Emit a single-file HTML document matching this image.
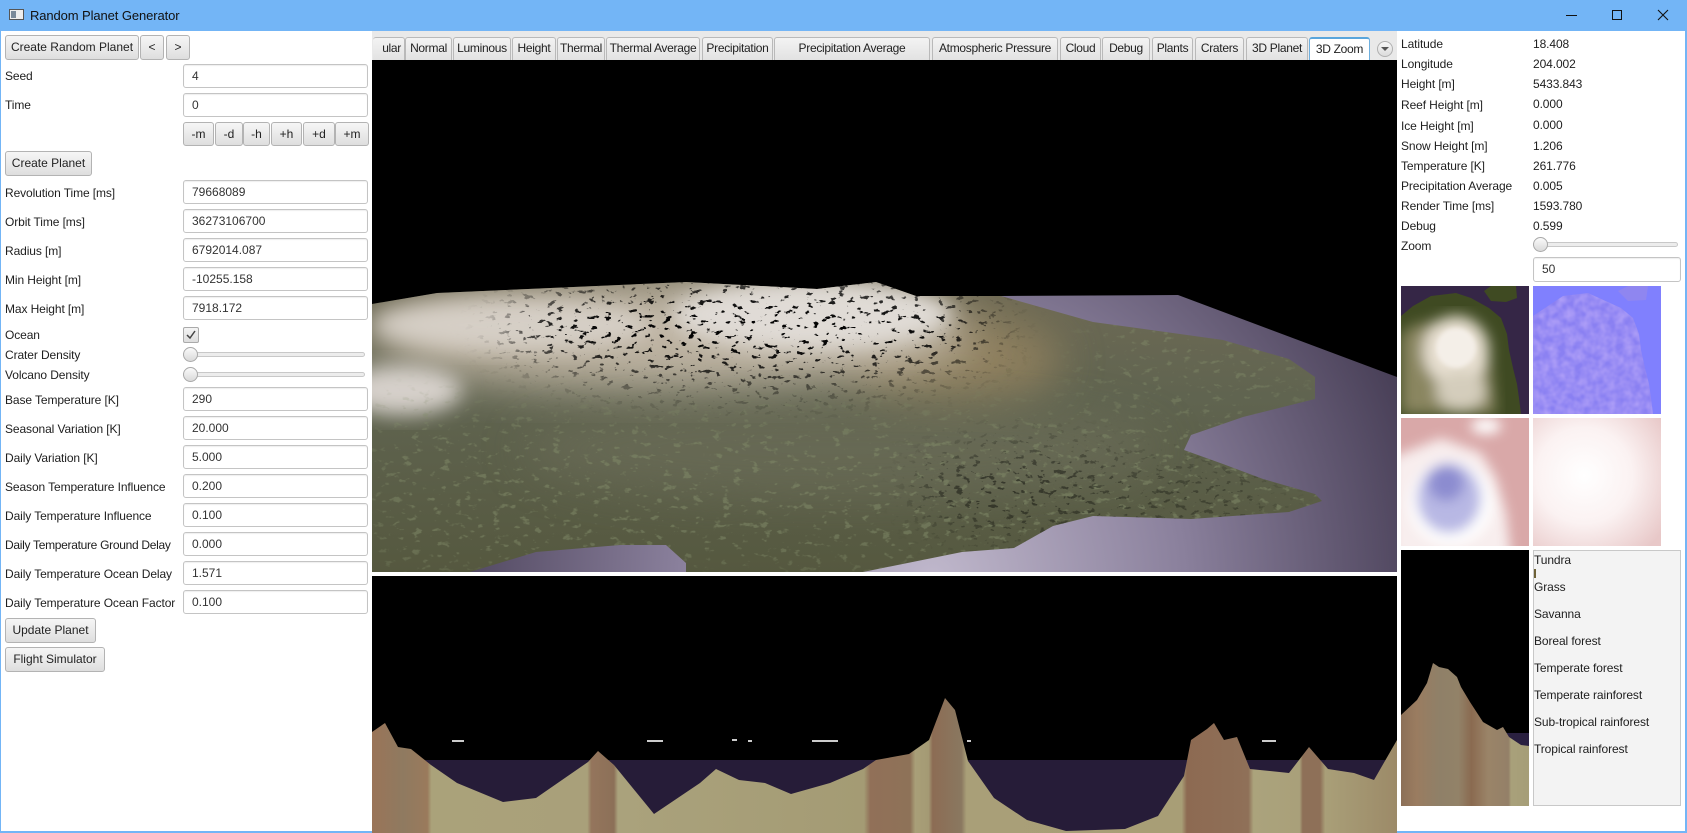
<!DOCTYPE html>
<html><head><meta charset="utf-8">
<style>
*{margin:0;padding:0;box-sizing:border-box}
body{width:1687px;height:833px;overflow:hidden;background:#fff;font-family:"Liberation Sans",sans-serif;font-size:12px;color:#1e1e1e;position:relative}
.a{position:absolute}
.lbl{position:absolute;white-space:nowrap;line-height:16px;letter-spacing:-0.1px}
.fld{position:absolute;height:24px;border:1px solid #c4c4c4;border-radius:3px;background:#fff;padding-left:8px;line-height:22px;color:#333;box-shadow:inset 0 1px 1px #eee}
.btn{position:absolute;height:25px;border:1px solid #b3b3b3;border-radius:3px;background:linear-gradient(#f6f6f6,#dedede);text-align:center;line-height:23px;color:#222;white-space:nowrap}
.tab{position:absolute;top:37px;height:23px;border:1px solid #b9b9b9;border-bottom:none;border-radius:3px 3px 0 0;background:linear-gradient(#f3f3f3,#e2e2e2);text-align:center;line-height:21px;white-space:nowrap;overflow:hidden;color:#222;letter-spacing:-0.3px;font-size:12px}
.trk{position:absolute;height:5px;border:1px solid #c8c8c8;border-radius:3px;background:#ececec}
.thumb{position:absolute;width:15px;height:15px;border-radius:50%;border:1px solid #a9a9a9;background:linear-gradient(#fafafa,#d9d9d9)}
</style></head><body>
<!-- title bar -->
<div class="a" style="left:0;top:0;width:1687px;height:31px;background:#73b5f6"></div>
<div class="a" style="left:9px;top:9px;width:15px;height:11px;border:1px solid #555;background:#eee"></div>
<div class="a" style="left:11px;top:11px;width:5px;height:7px;background:#7a8a9a"></div>
<div class="lbl" style="left:30px;top:8px;color:#111;font-size:13px">Random Planet Generator</div>
<div class="a" style="left:1566px;top:15px;width:11px;height:1px;background:#111"></div>
<div class="a" style="left:1612px;top:10px;width:10px;height:10px;border:1px solid #111"></div>
<svg class="a" style="left:1657px;top:9px" width="12" height="12"><path d="M1 1L11 11M11 1L1 11" stroke="#111" stroke-width="1.1"/></svg>
<div class="a" style="left:0;top:31px;width:1px;height:802px;background:#73b5f6"></div>
<div class="a" style="left:1685px;top:31px;width:2px;height:802px;background:#73b5f6"></div>
<div class="a" style="left:0;top:831px;width:1687px;height:2px;background:#73b5f6"></div>

<!-- left panel -->
<div class="btn" style="left:5px;top:35px;width:134px">Create Random Planet</div>
<div class="btn" style="left:140px;top:35px;width:24px">&lt;</div>
<div class="btn" style="left:166px;top:35px;width:24px">&gt;</div>
<div class="lbl" style="left:5px;top:68px">Seed</div><div class="fld" style="left:183px;top:64px;width:185px">4</div>
<div class="lbl" style="left:5px;top:97px">Time</div><div class="fld" style="left:183px;top:93px;width:185px">0</div>
<div class="btn" style="left:183px;top:122px;width:31px;height:24px">-m</div>
<div class="btn" style="left:215px;top:122px;width:28px;height:24px">-d</div>
<div class="btn" style="left:243px;top:122px;width:27px;height:24px">-h</div>
<div class="btn" style="left:271px;top:122px;width:31px;height:24px">+h</div>
<div class="btn" style="left:303px;top:122px;width:32px;height:24px">+d</div>
<div class="btn" style="left:335px;top:122px;width:34px;height:24px">+m</div>
<div class="btn" style="left:5px;top:151px;width:87px">Create Planet</div>
<div class="lbl" style="left:5px;top:185px">Revolution Time [ms]</div><div class="fld" style="left:183px;top:180px;width:185px">79668089</div>
<div class="lbl" style="left:5px;top:214px">Orbit Time [ms]</div><div class="fld" style="left:183px;top:209px;width:185px">36273106700</div>
<div class="lbl" style="left:5px;top:243px">Radius [m]</div><div class="fld" style="left:183px;top:238px;width:185px">6792014.087</div>
<div class="lbl" style="left:5px;top:272px">Min Height [m]</div><div class="fld" style="left:183px;top:267px;width:185px">-10255.158</div>
<div class="lbl" style="left:5px;top:301px">Max Height [m]</div><div class="fld" style="left:183px;top:296px;width:185px">7918.172</div>
<div class="lbl" style="left:5px;top:327px">Ocean</div>
<div class="a" style="left:183px;top:327px;width:16px;height:16px;border:1px solid #aaa;border-radius:2px;background:linear-gradient(#f4f4f4,#ddd)"></div>
<svg class="a" style="left:185px;top:329px" width="12" height="12"><path d="M2 6L5 9L10 2" fill="none" stroke="#444" stroke-width="1.5"/></svg>
<div class="lbl" style="left:5px;top:347px">Crater Density</div>
<div class="trk" style="left:183px;top:352px;width:182px"></div><div class="thumb" style="left:183px;top:347px"></div>
<div class="lbl" style="left:5px;top:367px">Volcano Density</div>
<div class="trk" style="left:183px;top:372px;width:182px"></div><div class="thumb" style="left:183px;top:367px"></div>
<div class="lbl" style="left:5px;top:392px">Base Temperature [K]</div><div class="fld" style="left:183px;top:387px;width:185px">290</div>
<div class="lbl" style="left:5px;top:421px">Seasonal Variation [K]</div><div class="fld" style="left:183px;top:416px;width:185px">20.000</div>
<div class="lbl" style="left:5px;top:450px">Daily Variation [K]</div><div class="fld" style="left:183px;top:445px;width:185px">5.000</div>
<div class="lbl" style="left:5px;top:479px">Season Temperature Influence</div><div class="fld" style="left:183px;top:474px;width:185px">0.200</div>
<div class="lbl" style="left:5px;top:508px">Daily Temperature Influence</div><div class="fld" style="left:183px;top:503px;width:185px">0.100</div>
<div class="lbl" style="left:5px;top:537px;letter-spacing:-0.3px">Daily Temperature Ground Delay</div><div class="fld" style="left:183px;top:532px;width:185px">0.000</div>
<div class="lbl" style="left:5px;top:566px">Daily Temperature Ocean Delay</div><div class="fld" style="left:183px;top:561px;width:185px">1.571</div>
<div class="lbl" style="left:5px;top:595px">Daily Temperature Ocean Factor</div><div class="fld" style="left:183px;top:590px;width:185px">0.100</div>
<div class="btn" style="left:5px;top:618px;width:91px">Update Planet</div>
<div class="btn" style="left:5px;top:647px;width:100px">Flight Simulator</div>

<!-- tabs -->
<div class="a" style="left:372px;top:31px;width:1025px;height:29px;background:#e9e9e9"></div>
<div class="tab" style="left:373px;width:32px;text-align:right;padding-right:3px;border-left:none">ular</div>
<div class="tab" style="left:405px;width:47px">Normal</div>
<div class="tab" style="left:453px;width:58px">Luminous</div>
<div class="tab" style="left:512px;width:44px">Height</div>
<div class="tab" style="left:557px;width:48px">Thermal</div>
<div class="tab" style="left:606px;width:94px">Thermal Average</div>
<div class="tab" style="left:702px;width:71px">Precipitation</div>
<div class="tab" style="left:774px;width:156px">Precipitation Average</div>
<div class="tab" style="left:932px;width:126px">Atmospheric Pressure</div>
<div class="tab" style="left:1060px;width:41px">Cloud</div>
<div class="tab" style="left:1102px;width:48px">Debug</div>
<div class="tab" style="left:1152px;width:41px">Plants</div>
<div class="tab" style="left:1195px;width:49px">Craters</div>
<div class="tab" style="left:1246px;width:62px">3D Planet</div>
<div class="tab" style="left:1309px;width:61px;background:#fff;border-color:#6fb0df;border-top:2px solid #5aa6dc">3D Zoom</div>
<div class="a" style="left:1377px;top:41px;width:16px;height:16px;border-radius:50%;border:1px solid #b0b0b0;background:linear-gradient(#f6f6f6,#dcdcdc)"></div>
<svg class="a" style="left:1381px;top:46px" width="8" height="6"><path d="M0 1L8 1L4 5Z" fill="#555"/></svg>

<!-- top 3D view -->
<svg class="a" style="left:372px;top:60px" width="1025" height="512">
<defs>
<radialGradient id="oc" cx="560" cy="520" r="560" gradientUnits="userSpaceOnUse">
<stop offset="0" stop-color="#c0b8cc"/><stop offset="0.45" stop-color="#8a809c"/><stop offset="1" stop-color="#3a3148"/></radialGradient>
<linearGradient id="ld" x1="0" y1="220" x2="0" y2="512" gradientUnits="userSpaceOnUse">
<stop offset="0" stop-color="#6f6a55"/><stop offset="0.4" stop-color="#606450"/><stop offset="1" stop-color="#55583f"/></linearGradient>
<clipPath id="lc"><path id="landp" d="M0 244L65 233L314 222L445 229L504 222L544 236L629 236L721 262L851 280L917 299L943 317L943 339L871 357L819 375L812 390L851 404L891 419L943 434L950 441L917 452L819 459L721 456L681 466L642 488L590 492L491 512L314 512L314 503L294 485L248 485L164 492L98 512L0 512Z"/></clipPath>
<filter id="bl" x="-30%" y="-30%" width="160%" height="160%"><feGaussianBlur stdDeviation="22"/></filter>
<filter id="bl2" x="-30%" y="-30%" width="160%" height="160%"><feGaussianBlur stdDeviation="10"/></filter>
<filter id="spk" x="0" y="0" width="100%" height="100%"><feTurbulence type="fractalNoise" baseFrequency="0.12 0.2" numOctaves="3" seed="5"/><feColorMatrix type="matrix" values="0 0 0 0 0  0 0 0 0 0  0 0 0 0 0  16 0 0 0 -10.2"/></filter>
<filter id="spk2" x="0" y="0" width="100%" height="100%"><feTurbulence type="fractalNoise" baseFrequency="0.1 0.16" numOctaves="3" seed="11"/><feColorMatrix type="matrix" values="0 0 0 0 0.22  0 0 0 0 0.26  0 0 0 0 0.14  8 0 0 0 -5"/></filter>
<mask id="sm"><rect width="1025" height="512" fill="#000"/><ellipse cx="380" cy="270" rx="250" ry="55" fill="#fff" filter="url(#bl)"/><ellipse cx="650" cy="430" rx="110" ry="45" fill="#777" filter="url(#bl)"/><ellipse cx="790" cy="440" rx="120" ry="35" fill="#555" filter="url(#bl)"/></mask>
<mask id="gm"><rect width="1025" height="512" fill="#000"/><rect x="0" y="350" width="1025" height="162" fill="#888" filter="url(#bl)"/><ellipse cx="820" cy="300" rx="120" ry="60" fill="#777" filter="url(#bl)"/></mask>
</defs>
<rect width="1025" height="512" fill="#000"/>
<path d="M629 236L806 235L1025 317L1025 512L0 512L0 300Z" fill="url(#oc)"/>
<use href="#landp" fill="url(#ld)"/>
<g clip-path="url(#lc)">
<ellipse cx="580" cy="300" rx="110" ry="45" fill="#a08a64" opacity="0.7" filter="url(#bl)"/>
<ellipse cx="300" cy="275" rx="300" ry="55" fill="#bdb3a2" filter="url(#bl)"/>
<ellipse cx="440" cy="255" rx="140" ry="35" fill="#e0dbd6" filter="url(#bl2)"/>
<ellipse cx="140" cy="265" rx="140" ry="25" fill="#d6cfc6" filter="url(#bl2)"/>
<ellipse cx="30" cy="330" rx="60" ry="25" fill="#d6d0ca" filter="url(#bl2)"/>
<ellipse cx="470" cy="390" rx="320" ry="50" fill="#6d6e5a" opacity="0.6" filter="url(#bl)"/>
<rect width="1025" height="512" filter="url(#spk2)" mask="url(#gm)"/>
<rect width="1025" height="512" filter="url(#spk)" mask="url(#sm)"/>
</g>
</svg>
<div class="a" style="left:372px;top:572px;width:1025px;height:4px;background:#fff"></div>

<!-- bottom view -->
<svg class="a" style="left:372px;top:576px" width="1025" height="257">
<defs>
<linearGradient id="st" x1="0" x2="1025" y1="0" y2="0" gradientUnits="userSpaceOnUse">
<stop offset="0" stop-color="#9a7458"/><stop offset="0.03" stop-color="#8f7a60"/><stop offset="0.054" stop-color="#9a7a5c"/><stop offset="0.058" stop-color="#aaa27a"/>
<stop offset="0.21" stop-color="#a9a07a"/><stop offset="0.214" stop-color="#94755c"/><stop offset="0.236" stop-color="#8c7058"/><stop offset="0.24" stop-color="#aaa27c"/>
<stop offset="0.48" stop-color="#a49b74"/><stop offset="0.486" stop-color="#917058"/><stop offset="0.525" stop-color="#8e7258"/><stop offset="0.53" stop-color="#a99f78"/>
<stop offset="0.543" stop-color="#a49a74"/><stop offset="0.547" stop-color="#8c6c54"/><stop offset="0.575" stop-color="#8a7860"/><stop offset="0.58" stop-color="#a99f78"/>
<stop offset="0.79" stop-color="#a89e76"/><stop offset="0.795" stop-color="#8d6a52"/><stop offset="0.855" stop-color="#8f7058"/><stop offset="0.86" stop-color="#aba37c"/>
<stop offset="0.905" stop-color="#a9a07a"/><stop offset="0.908" stop-color="#8e7058"/><stop offset="0.925" stop-color="#8e7058"/><stop offset="0.93" stop-color="#a99f78"/><stop offset="1" stop-color="#9c8a68"/>
</linearGradient></defs>
<rect width="1025" height="257" fill="#000"/>
<rect y="184" width="1025" height="73" fill="#261c38"/>
<g fill="#ccc"><rect x="80" y="164" width="12" height="2"/><rect x="275" y="164" width="16" height="2"/><rect x="360" y="163" width="5" height="2"/><rect x="376" y="164" width="4" height="2"/><rect x="440" y="164" width="26" height="2"/><rect x="565" y="164" width="6" height="2"/><rect x="595" y="164" width="4" height="2"/><rect x="890" y="164" width="14" height="2"/></g>
<path fill="url(#st)" d="M0 156L13 147L26 171L39 173L59 189L85 207L131 226L164 222L216 186L226 175L242 189L282 238L328 207L344 193L367 204L393 207L419 218L458 207L491 193L504 184L537 178L557 164L573 122L583 134L596 185L622 222L655 244L694 255L753 253L786 240L812 200L819 164L835 153L842 147L852 164L865 161L878 193L917 197L937 171L956 193L982 197L1002 204L1025 164L1025 257L0 257Z"/>
</svg>

<!-- right panel -->
<div class="lbl" style="left:1401px;top:36px">Latitude</div><div class="lbl" style="left:1533px;top:36px">18.408</div>
<div class="lbl" style="left:1401px;top:56px">Longitude</div><div class="lbl" style="left:1533px;top:56px">204.002</div>
<div class="lbl" style="left:1401px;top:76px">Height [m]</div><div class="lbl" style="left:1533px;top:76px">5433.843</div>
<div class="lbl" style="left:1401px;top:97px">Reef Height [m]</div><div class="lbl" style="left:1533px;top:96px">0.000</div>
<div class="lbl" style="left:1401px;top:118px">Ice Height [m]</div><div class="lbl" style="left:1533px;top:117px">0.000</div>
<div class="lbl" style="left:1401px;top:138px">Snow Height [m]</div><div class="lbl" style="left:1533px;top:138px">1.206</div>
<div class="lbl" style="left:1401px;top:158px">Temperature [K]</div><div class="lbl" style="left:1533px;top:158px">261.776</div>
<div class="lbl" style="left:1401px;top:178px">Precipitation Average</div><div class="lbl" style="left:1533px;top:178px">0.005</div>
<div class="lbl" style="left:1401px;top:198px">Render Time [ms]</div><div class="lbl" style="left:1533px;top:198px">1593.780</div>
<div class="lbl" style="left:1401px;top:218px">Debug</div><div class="lbl" style="left:1533px;top:218px">0.599</div>
<div class="lbl" style="left:1401px;top:238px">Zoom</div>
<div class="trk" style="left:1533px;top:242px;width:145px"></div><div class="thumb" style="left:1533px;top:237px"></div>
<div class="fld" style="left:1533px;top:257px;width:148px;height:25px;line-height:23px">50</div>

<!-- thumbnails -->
<svg class="a" style="left:1401px;top:286px" width="128" height="128">
<defs><filter id="t1"><feGaussianBlur stdDeviation="7"/></filter><filter id="t1b"><feGaussianBlur stdDeviation="2"/></filter></defs>
<rect width="128" height="128" fill="#352646"/>
<path d="M0 30L12 20L30 10L55 7L70 12L88 22L100 32L106 48L108 64L112 82L116 98L118 112L120 128L0 128Z" fill="#3f4a22"/>
<path d="M83 5L90 0L115 0L116 12L105 16L90 15Z" fill="#3f4a22"/>
<g filter="url(#t1)"><path d="M10 40L60 30L80 50L90 80L95 128L0 128L0 50Z" fill="#8a8660"/><ellipse cx="55" cy="65" rx="33" ry="35" fill="#e8e0d2"/><ellipse cx="60" cy="105" rx="25" ry="20" fill="#d4cdbc"/></g>
<ellipse cx="55" cy="62" rx="20" ry="20" fill="#f4efe8" filter="url(#t1b)"/>
</svg>
<svg class="a" style="left:1533px;top:286px" width="128" height="128">
<defs><filter id="t2" x="0" y="0" width="100%" height="100%"><feTurbulence type="fractalNoise" baseFrequency="0.12" numOctaves="2" seed="4"/><feColorMatrix type="matrix" values="0 0 0 0 0.5  0 0 0 0 0.4  0 0 0 0 0.95  1.2 0 0 0 -0.3"/></filter>
<clipPath id="c2"><path d="M0 30L30 10L55 7L88 22L100 32L106 48L108 64L112 82L116 98L118 112L120 128L0 128Z"/></clipPath></defs>
<rect width="128" height="128" fill="#8080fe"/>
<g clip-path="url(#c2)"><rect width="128" height="128" fill="#8a80f2"/><rect width="128" height="128" filter="url(#t2)"/></g>
<path d="M85 5L95 0L115 0L113 14L95 15Z" fill="#8f86f0"/>
</svg>
<svg class="a" style="left:1401px;top:418px" width="128" height="128">
<defs><filter id="t3"><feGaussianBlur stdDeviation="6"/></filter></defs>
<rect width="128" height="128" fill="#d9a8a8"/>
<g filter="url(#t3)"><path d="M-10 40L40 20L80 35L95 60L105 95L110 140L-10 140Z" fill="#f8eeee"/><ellipse cx="50" cy="85" rx="42" ry="42" fill="#fff"/><ellipse cx="48" cy="80" rx="32" ry="35" fill="#b8b8e4"/><ellipse cx="45" cy="65" rx="18" ry="18" fill="#8c8cd0"/><ellipse cx="85" cy="8" rx="15" ry="8" fill="#fff"/></g>
</svg>
<svg class="a" style="left:1533px;top:418px" width="128" height="128">
<defs><radialGradient id="g4" cx="0.4" cy="0.45" r="0.75"><stop offset="0" stop-color="#fff"/><stop offset="0.5" stop-color="#fbf2f2"/><stop offset="1" stop-color="#e8c8c8"/></radialGradient></defs>
<rect width="128" height="128" fill="url(#g4)"/>
</svg>

<!-- profile -->
<svg class="a" style="left:1401px;top:550px" width="128" height="256">
<defs><linearGradient id="pg" x1="0" x2="128" y1="0" y2="0" gradientUnits="userSpaceOnUse">
<stop offset="0" stop-color="#8c7058"/><stop offset="0.12" stop-color="#9a7c60"/><stop offset="0.3" stop-color="#8f8068"/><stop offset="0.45" stop-color="#928268"/><stop offset="0.55" stop-color="#8a6a50"/><stop offset="0.68" stop-color="#9a8468"/><stop offset="0.84" stop-color="#948068"/><stop offset="0.86" stop-color="#a8a07a"/><stop offset="1" stop-color="#a69e78"/></linearGradient></defs>
<rect width="128" height="256" fill="#000"/>
<rect x="105" y="183" width="23" height="73" fill="#2a2040"/>
<path fill="url(#pg)" d="M0 165L16 150L26 133L32 113L38 117L47 119L56 127L60 137L69 152L82 172L96 180L102 177L108 187L120 195L128 196L128 256L0 256Z"/>
</svg>

<!-- legend -->
<div class="a" style="left:1533px;top:550px;width:148px;height:256px;background:#f3f3f3;border:1px solid #c8c8c8"></div>
<div class="a" style="left:1534px;top:569px;width:2px;height:9px;background:#6e6238"></div>
<div class="lbl" style="left:1534px;top:552px">Tundra</div>
<div class="lbl" style="left:1534px;top:579px">Grass</div>
<div class="lbl" style="left:1534px;top:606px">Savanna</div>
<div class="lbl" style="left:1534px;top:633px">Boreal forest</div>
<div class="lbl" style="left:1534px;top:660px">Temperate forest</div>
<div class="lbl" style="left:1534px;top:687px">Temperate rainforest</div>
<div class="lbl" style="left:1534px;top:714px">Sub-tropical rainforest</div>
<div class="lbl" style="left:1534px;top:741px">Tropical rainforest</div>
</body></html>
